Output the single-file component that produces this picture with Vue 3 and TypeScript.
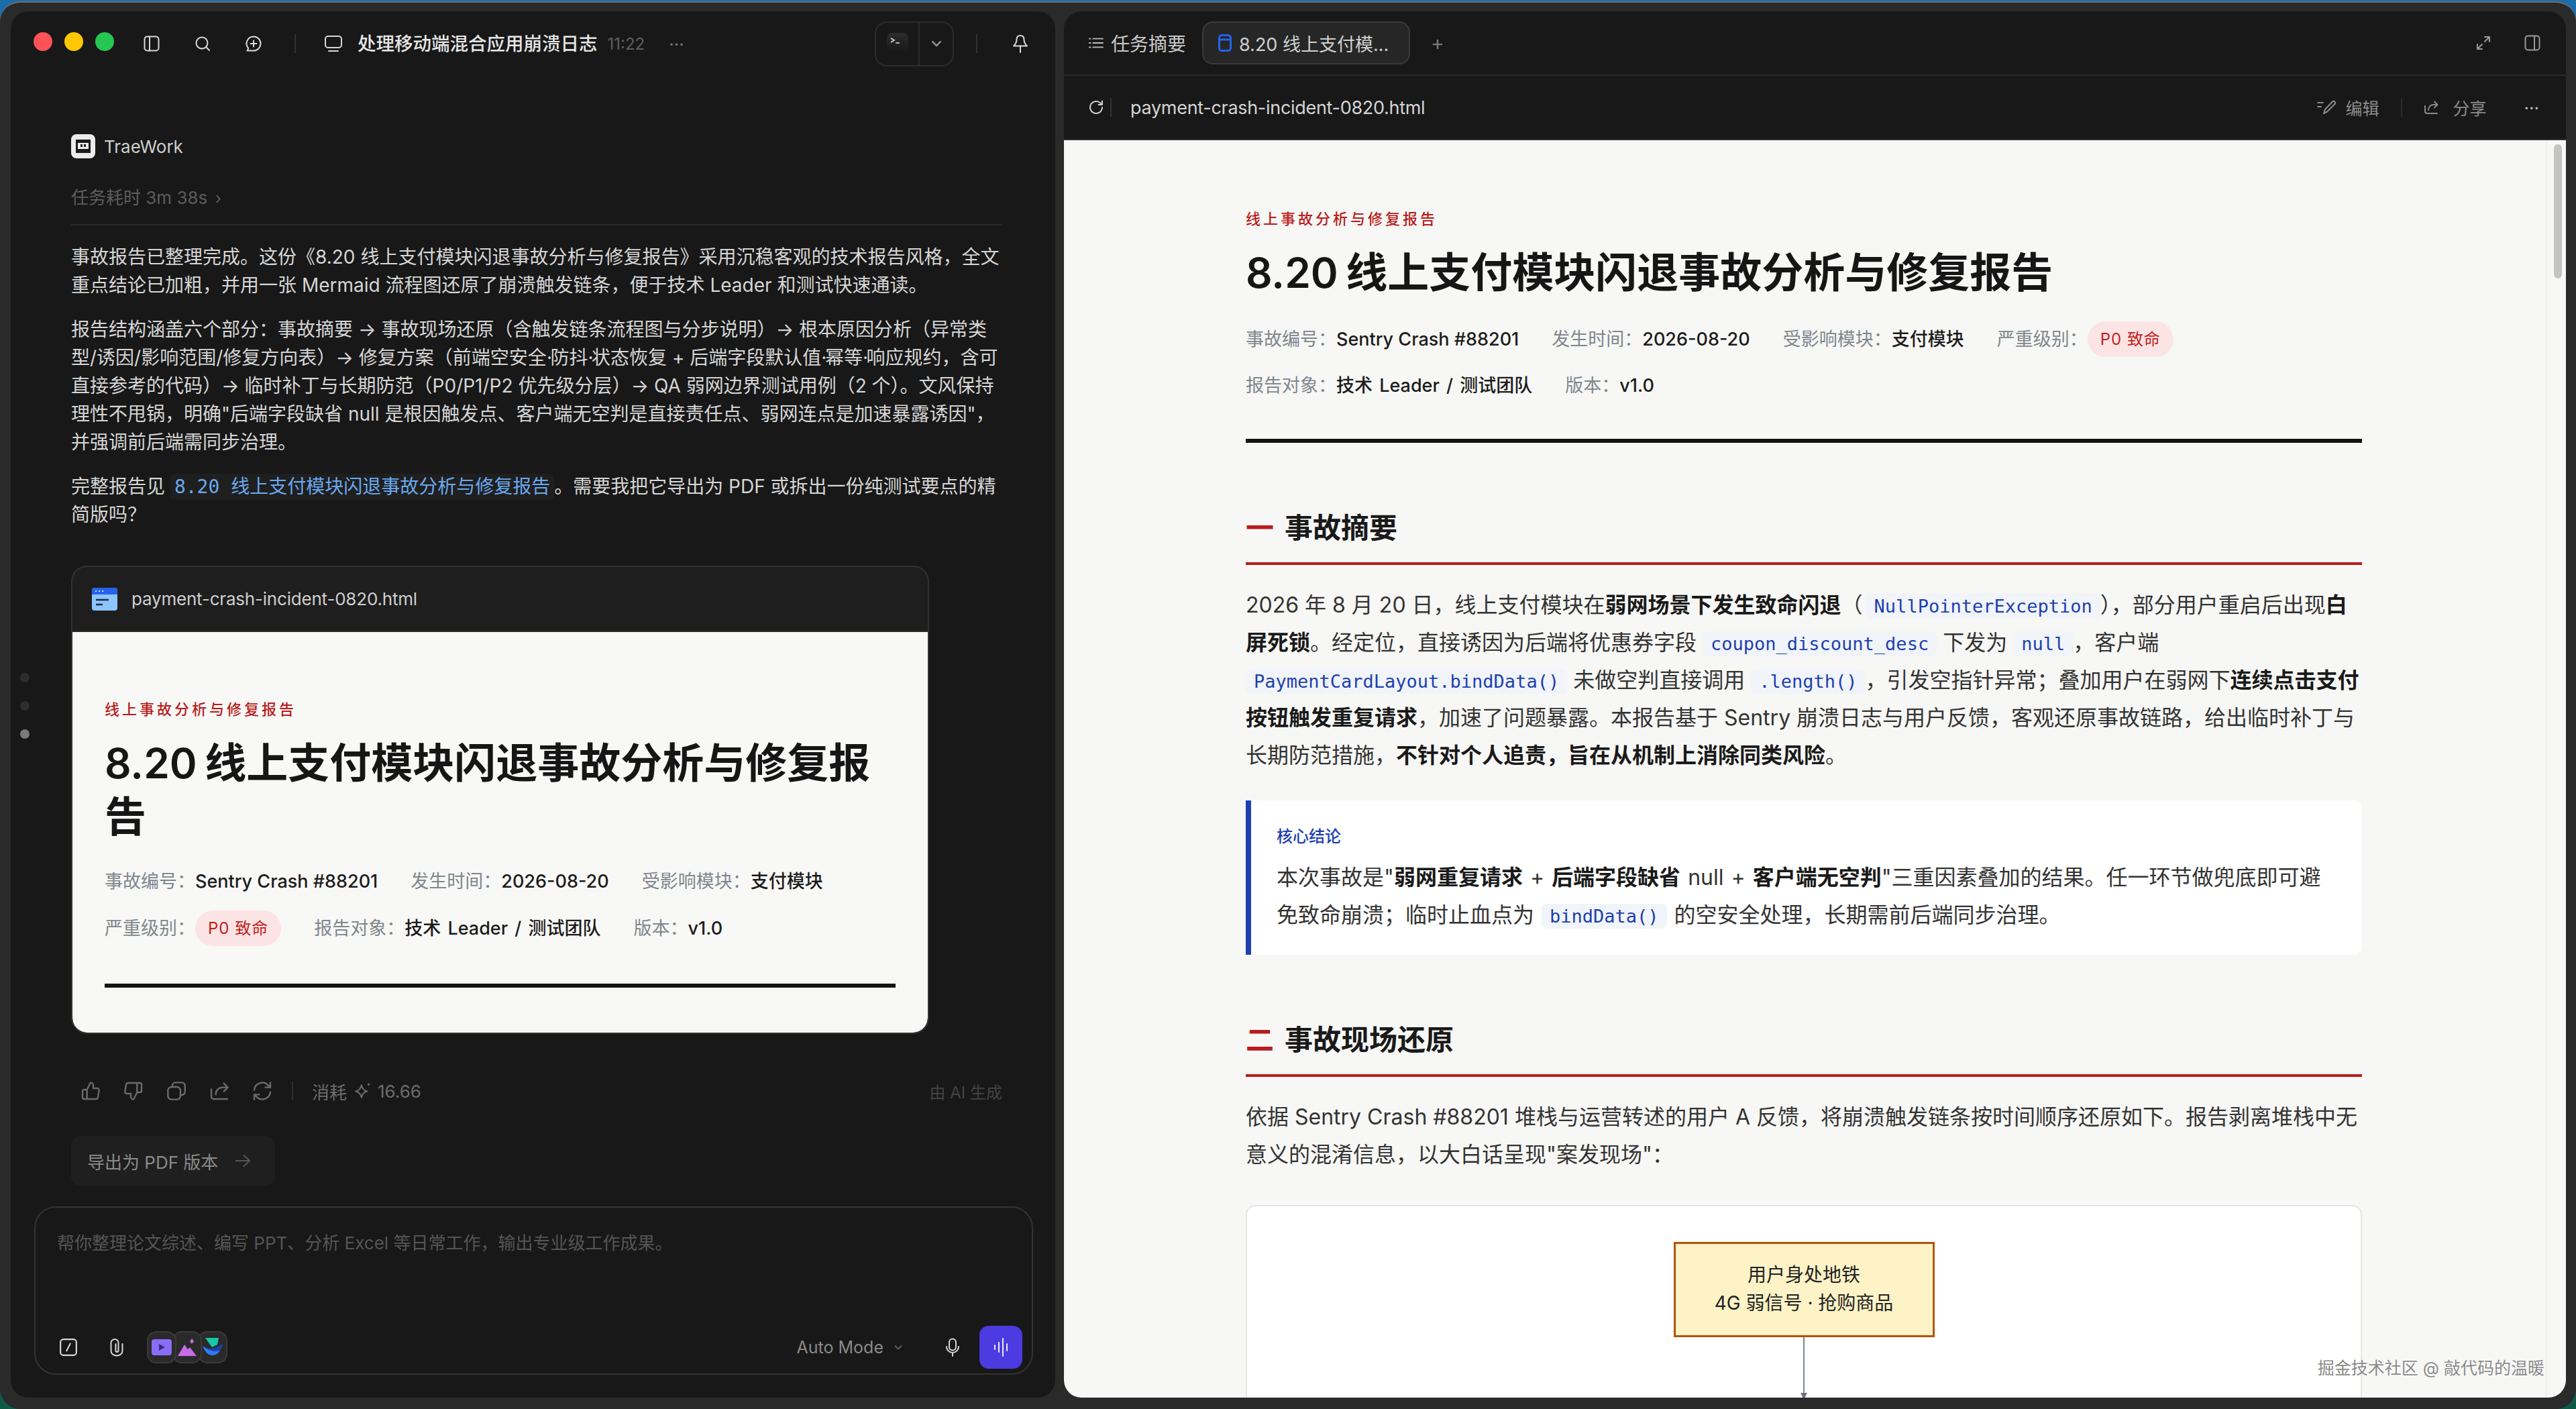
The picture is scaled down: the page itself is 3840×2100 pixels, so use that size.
<script setup lang="ts">
interface MetaItem {
  label: string;
  value: string;
  pill?: boolean;
  spaced?: boolean;
}

const metaItems: MetaItem[] = [
  { label: '事故编号：', value: 'Sentry Crash #88201' },
  { label: '发生时间：', value: '2026-08-20' },
  { label: '受影响模块：', value: '支付模块' },
  { label: '严重级别：', value: 'P0 致命', pill: true },
  { label: '报告对象：', value: '技术 Leader / 测试团队', spaced: true },
  { label: '版本：', value: 'v1.0' },
];

const dots = [false, false, true];
</script>

<template>
  <div class="desktop">
    <div class="window">
      <section class="panel left">
        <div class="sidedots">
          <i v-for="(on, i) in dots" :key="i" :class="{ on }"></i>
        </div>

        <header class="bar">
          <div class="lights"><i class="r"></i><i class="y"></i><i class="g"></i></div>
          <svg class="ico first" viewBox="0 0 24 24"><rect x="1.5" y="1.5" width="21" height="21" rx="4" /><path d="M9 1.5v21" /></svg>
          <svg class="ico gap52" viewBox="0 0 24 24"><circle cx="11" cy="11" r="8.5" /><path d="M17.5 17.5 22 22" /></svg>
          <svg class="ico gap52" viewBox="0 0 24 24"><path d="M12 1.5a10.5 10.5 0 0 1 0 21H2.5l1.8-3.4A10.5 10.5 0 0 1 12 1.5Z" /><path d="M12 7.5v9M7.5 12h9" /></svg>
          <span class="vline gap49"></span>
          <svg class="ico monitor" viewBox="0 0 28 28"><rect x="2" y="3" width="24" height="17" rx="4" /><path d="M7 25h14" /></svg>
          <h1 class="task-title">处理移动端混合应用崩溃日志</h1>
          <span class="task-time">11:22</span>
          <span class="more">···</span>
          <div class="widget">
            <div class="widget-app">
              <span class="tile"><svg viewBox="0 0 32 32"><path d="M6 8l5 3-5 3M13 15h6" fill="none" stroke="#ddd" stroke-width="1.6" /></svg></span>
            </div>
            <div class="widget-arrow">
              <svg viewBox="0 0 16 10"><path d="M1.5 1.5 8 8l6.5-6.5" fill="none" stroke="#999" stroke-width="2.4" /></svg>
            </div>
          </div>
          <span class="vline gap33"></span>
          <svg class="ico bell" viewBox="0 0 24 28"><path d="M12 2c3.500 0 5.500 2.500 5.500 6 0 4 1.200 6.500 4.500 9.500H2C5.300 14.500 6.500 12 6.500 8c0-3.500 2-6 5.500-6Z" /><path d="M12 17.500V27" /></svg>
        </header>

        <div class="thread">
          <div class="agent">
            <span class="agent-logo">
              <svg viewBox="0 0 36 36"><rect x="0" y="0" width="36" height="36" rx="8" fill="#ececec" /><rect x="7" y="8" width="22" height="20" fill="#1a1a1a" /><rect x="10" y="13" width="16" height="9" fill="#ececec" /><rect x="14" y="15" width="3" height="4" fill="#1a1a1a" /><rect x="19" y="15" width="3" height="4" fill="#1a1a1a" /></svg>
            </span>
            <span class="agent-name">TraeWork</span>
          </div>
          <div class="elapsed">任务耗时 3m 38s <span class="chev">›</span></div>
          <div class="hr"></div>

          <p class="msg">事故报告已整理完成。这份《8.20 线上支付模块闪退事故分析与修复报告》采用沉稳客观的技术报告风格，全文<br />重点结论已加粗，并用一张 Mermaid 流程图还原了崩溃触发链条，便于技术 Leader 和测试快速通读。</p>
          <p class="msg">报告结构涵盖六个部分：事故摘要 → 事故现场还原（含触发链条流程图与分步说明）→ 根本原因分析（异常类<br />型/诱因/影响范围/修复方向表）→ 修复方案（前端空安全<span class="mid">·</span>防抖<span class="mid">·</span>状态恢复 + 后端字段默认值<span class="mid">·</span>幂等<span class="mid">·</span>响应规约，含可<br />直接参考的代码）→ 临时补丁与长期防范（P0/P1/P2 优先级分层）→ QA 弱网边界测试用例（2 个）。文风保持<br />理性不甩锅，明确"后端字段缺省 null 是根因触发点、客户端无空判是直接责任点、弱网连点是加速暴露诱因"，<br />并强调前后端需同步治理。</p>
          <p class="msg">完整报告见 <code class="link">8.20 线上支付模块闪退事故分析与修复报告</code>。需要我把它导出为 PDF 或拆出一份纯测试要点的精<br />简版吗？</p>

          <div class="file-card">
            <div class="file-head">
              <svg class="file-ico" viewBox="0 0 38 34"><rect width="38" height="34" rx="4" fill="#8cc4ff" /><path d="M0 4a4 4 0 0 1 4-4h30a4 4 0 0 1 4 4v6H0Z" fill="#2563eb" /><path d="M5 5h2M10 5h2M15 5h2" stroke="#cfe4ff" stroke-width="2" /><path d="M6 18h19M6 25h10" stroke="#1a2a4a" stroke-width="2.500" /></svg>
              <span>payment-crash-incident-0820.html</span>
            </div>
            <div class="doc card-doc">
              <div class="eyebrow">线上事故分析与修复报告</div>
              <div class="doc-title">8.20 线上支付模块闪退事故分析与修复报告</div>
              <div class="meta">
                <div v-for="m in metaItems" :key="m.label" class="meta-item">
                  <span class="meta-label">{{ m.label }}</span>
                  <span :class="[m.pill ? 'pill' : 'meta-value', { spaced: m.spaced }]">{{ m.value }}</span>
                </div>
              </div>
              <div class="thick"></div>
            </div>
          </div>

          <div class="actions">
            <svg class="ico act" viewBox="0 0 24 24"><path d="M8 10.500V21H4.500A1.500 1.500 0 0 1 3 19.500V12a1.500 1.500 0 0 1 1.500-1.500H8l4-8a3 3 0 0 1 3 3V9h4.500a2 2 0 0 1 2 2.300l-1.200 7.500A2.500 2.500 0 0 1 17.800 21H8" /></svg>
            <svg class="ico act" viewBox="0 0 24 24"><path d="M16 13.500V3h3.500A1.500 1.500 0 0 1 21 4.500V12a1.500 1.500 0 0 1-1.500 1.500H16l-4 8a3 3 0 0 1-3-3V15H4.500a2 2 0 0 1-2-2.300l1.200-7.500A2.500 2.500 0 0 1 6.200 3H16" /></svg>
            <svg class="ico act" viewBox="0 0 24 24"><rect x="2.500" y="7.500" width="14" height="14" rx="4" /><path d="M7.500 7.500V6A3.500 3.500 0 0 1 11 2.500h7A3.500 3.500 0 0 1 21.500 6v7a3.500 3.500 0 0 1-3.500 3.500h-1.500" /></svg>
            <svg class="ico act" viewBox="0 0 24 24"><path d="M3 10v8a3 3 0 0 0 3 3h15" /><path d="M8 16c0-5 3.500-8 8-8h5M17 3.500 21.500 8 17 12.500" /></svg>
            <svg class="ico act" viewBox="0 0 24 24"><path d="M3 11a9 9 0 0 1 15.500-5.500L21 8M21 2.500V8h-5.500" /><path d="M21 13a9 9 0 0 1-15.500 5.500L3 16M3 21.500V16h5.500" /></svg>
            <span class="vline small"></span>
            <span class="cost">消耗</span>
            <svg class="ico spark" viewBox="0 0 26 26"><path d="M11 5c1 5 3.500 7.500 8 8.500-4.500 1-7 3.500-8 8.500-1-5-3.500-7.500-8-8.500 4.500-1 7-3.500 8-8.500Z" /><path d="M21 1.500c.3 1.500 1 2.200 2.500 2.500-1.500.3-2.200 1-2.500 2.500-.3-1.500-1-2.200-2.500-2.500 1.500-.3 2.200-1 2.500-2.500Z" fill="currentColor" stroke="none" /></svg>
            <span class="cost num">16.66</span>
            <span class="ai-tag">由 AI 生成</span>
          </div>

          <button class="suggest">导出为 PDF 版本 <svg viewBox="0 0 26 22"><path d="M2 11h21M14 2.500 23 11l-9 8.500" fill="none" stroke="#555" stroke-width="2" /></svg></button>
        </div>

        <div class="composer">
          <div class="placeholder">帮你整理论文综述、编写 PPT、分析 Excel 等日常工作，输出专业级工作成果。</div>
          <div class="composer-row">
            <svg class="ico tool" viewBox="0 0 26 26"><rect x="2" y="2" width="22" height="22" rx="4" /><path d="M15.500 8 10.500 18" /></svg>
            <svg class="ico clip" viewBox="0 0 24 28"><path d="M20.500 9v10.500a8.500 7 0 0 1-17 0V7a5.500 5 0 0 1 11 0v12a2 2 0 0 1-4 0V9" /></svg>
            <div class="chips">
              <span class="chip c1"><svg viewBox="0 0 30 24"><rect width="30" height="24" rx="4" fill="#8b6cf6" /><path d="M11 7l9 5-9 5Z" fill="#3a2a80" /></svg></span>
              <span class="chip c2"><svg viewBox="0 0 30 26"><path d="M1 26 11 9l5 7 3-3 10 13Z" fill="#c76be6" /><path d="M22 0l3 4-3 4-3-4Z" fill="#c76be6" /></svg></span>
              <span class="chip c3"><svg viewBox="0 0 30 28"><path d="M4 0h20l-2 10-8 4Z" fill="#14c8a8" /><path d="M30 9c-1 9-8 13-14 13C8 22 3 19 0 12c6 4 12 5 18 3Z" fill="#1e3fae" /><path d="M0 12c3 8 8 14 14 14 6 0 10-3 12-8-6 4-16 2-26-6Z" fill="#2f7cf0" /></svg></span>
            </div>
            <span class="mode">Auto Mode <svg viewBox="0 0 12 8"><path d="M1 1.500 6 6.500l5-5" fill="none" stroke="#777" stroke-width="1.500" /></svg></span>
            <svg class="ico mic" viewBox="0 0 22 28"><rect x="6" y="1.500" width="10" height="17" rx="5" /><path d="M2 13a9 9 0 0 0 18 0M11 22v5" /></svg>
            <button class="send"><svg viewBox="0 0 24 32"><path d="M3 13v6M9 9v14M15 3v26M21 11v10" fill="none" stroke="#fff" stroke-width="1.800" stroke-linecap="round" /></svg></button>
          </div>
        </div>
      </section>

      <section class="panel right">
        <header class="tabs">
          <svg class="ico list" viewBox="0 0 24 24"><path d="M7 5h16M7 12h16M7 19h16M1 5h2M1 12h2M1 19h2" /></svg>
          <span class="tab-plain">任务摘要</span>
          <div class="tab-on">
            <svg class="tab-ico" viewBox="0 0 20 26"><rect x="1.500" y="1.500" width="17" height="23" rx="4" fill="none" stroke="#2563eb" stroke-width="3" /><path d="M1.500 8h17" stroke="#2563eb" stroke-width="3" /></svg>
            <span>8.20 线上支付模...</span>
          </div>
          <span class="plus">+</span>
          <svg class="ico expand" viewBox="0 0 24 24"><path d="M14 3h7v7M21 3l-7 7M10 21H3v-7M3 21l7-7" /></svg>
          <svg class="ico split" viewBox="0 0 24 24"><rect x="1.500" y="1.500" width="21" height="21" rx="4" /><path d="M15 1.500v21" /></svg>
        </header>
        <div class="addr">
          <svg class="ico refresh" viewBox="0 0 24 24"><path d="M21 12a9 9 0 1 1-3-6.700L21 8M21 2.500V8h-5.500" /></svg>
          <span class="vline addr-line"></span>
          <span class="addr-name">payment-crash-incident-0820.html</span>
          <svg class="ico addr-edit" viewBox="0 0 28 24"><path d="M1 5h8M1 11h5M10 21l2-6L23 3.500a2.500 2.500 0 0 1 3.500 3.500L15 18.500Z" /></svg>
          <span class="addr-act">编辑</span>
          <span class="vline addr-div"></span>
          <svg class="ico addr-share" viewBox="0 0 24 24"><path d="M3 10v8a3 3 0 0 0 3 3h15" /><path d="M8 16c0-5 3.500-8 8-8h5M17 3.500 21.500 8 17 12.500" /></svg>
          <span class="addr-act share-label">分享</span>
          <span class="addr-more">···</span>
        </div>

        <div class="viewer">
          <div class="doc main-doc">
            <div class="eyebrow">线上事故分析与修复报告</div>
            <div class="doc-title">8.20 线上支付模块闪退事故分析与修复报告</div>
            <div class="meta">
              <div v-for="m in metaItems" :key="m.label" class="meta-item">
                <span class="meta-label">{{ m.label }}</span>
                <span :class="[m.pill ? 'pill' : 'meta-value', { spaced: m.spaced }]">{{ m.value }}</span>
              </div>
            </div>
            <div class="thick"></div>

            <h2><em>一</em>事故摘要</h2>
            <p class="body">2026 年 8 月 20 日，线上支付模块在<b>弱网场景下发生致命闪退</b>（<code class="tight">NullPointerException</code>），部分用户重启后出现<b>白<br />屏死锁</b>。经定位，直接诱因为后端将优惠券字段 <code>coupon_discount_desc</code> 下发为 <code>null</code>，客户端<br /><code>PaymentCardLayout.bindData()</code> 未做空判直接调用 <code>.length()</code>，引发空指针异常；叠加用户在弱网下<b>连续点击支付<br />按钮触发重复请求</b>，加速了问题暴露。本报告基于 Sentry 崩溃日志与用户反馈，客观还原事故链路，给出临时补丁与<br />长期防范措施，<b>不针对个人追责，旨在从机制上消除同类风险</b>。</p>

            <div class="callout">
              <div class="callout-label">核心结论</div>
              <p>本次事故是"<b>弱网重复请求</b> + <b>后端字段缺省</b> null + <b>客户端无空判</b>"三重因素叠加的结果。任一环节做兜底即可避<br />免致命崩溃；临时止血点为 <code>bindData()</code> 的空安全处理，长期需前后端同步治理。</p>
            </div>

            <h2><em>二</em>事故现场还原</h2>
            <p class="body">依据 Sentry Crash #88201 堆栈与运营转述的用户 A 反馈，将崩溃触发链条按时间顺序还原如下。报告剥离堆栈中无<br />意义的混淆信息，以大白话呈现"案发现场"：</p>

            <div class="diagram">
              <div class="node">用户身处地铁<br />4G 弱信号 · 抢购商品</div>
              <div class="edge"></div>
              <div class="edge-head"></div>
            </div>
          </div>
          <div class="scrollbar"></div>
          <div class="watermark">掘金技术社区 @ 敲代码的温暖</div>
        </div>
      </section>
    </div>
  </div>
</template>

<style>
html,
body {
  margin: 0;
  background: #222;
}
</style>

<style scoped>
.desktop {
  width: 3840px;
  height: 2100px;
  overflow: hidden;
  background: linear-gradient(180deg, #1d6ea8 0%, #1d6ea8 50%, #0e5a48 100%);
  font-family: Inter, "Noto Sans CJK SC", sans-serif;
}
.window {
  box-sizing: border-box;
  width: 3840px;
  height: 2098px;
  margin-top: 2px;
  padding: 13px 15px 15px 16px;
  display: flex;
  gap: 13px;
  background: #2a2a2a;
  border-top: 2px solid #6d6d6d;
  border-radius: 30px;
}
.panel {
  position: relative;
  height: 2066px;
  background: #181818;
  border-radius: 26px;
  overflow: hidden;
  display: flex;
  flex-direction: column;
}
.left {
  width: 1557px;
}
.right {
  width: 2239px;
}
.ico {
  fill: none;
  stroke: currentColor;
  stroke-width: 2;
  stroke-linecap: round;
  stroke-linejoin: round;
  flex-shrink: 0;
}

.sidedots {
  position: absolute;
  left: 14px;
  top: 986px;
  display: flex;
  flex-direction: column;
  gap: 28px;
}
.sidedots i {
  width: 14px;
  height: 14px;
  border-radius: 50%;
  background: #2e2e2e;
}
.sidedots i.on {
  background: #7a7a7a;
}

.bar {
  height: 96px;
  flex-shrink: 0;
  display: flex;
  align-items: center;
  padding-left: 34px;
  color: #d8d8d8;
}
.lights {
  display: flex;
  gap: 18px;
  margin-top: -6px;
}
.lights i {
  width: 28px;
  height: 28px;
  border-radius: 50%;
}
.lights .r {
  background: #ff5257;
}
.lights .y {
  background: #ffc800;
}
.lights .g {
  background: #28c653;
}
.bar .ico {
  width: 24px;
  height: 24px;
}
.first {
  margin-left: 44px;
}
.gap52 {
  margin-left: 52px;
}
.vline {
  width: 2px;
  height: 28px;
  background: #333;
  flex-shrink: 0;
}
.gap49 {
  margin-left: 49px;
}
.bar .monitor {
  width: 28px;
  height: 28px;
  margin-left: 42px;
}
.task-title {
  margin: 0 0 0 22px;
  font-size: 27.5px;
  font-weight: 500;
  line-height: 40px;
  color: #e6e6e6;
}
.task-time {
  margin-left: 15px;
  font-size: 24px;
  color: #5e5e5e;
}
.more {
  margin-left: 36px;
  font-size: 26px;
  color: #777;
}
.widget {
  margin-left: auto;
  width: 118px;
  height: 67px;
  box-sizing: border-box;
  border: 2px solid #2c2c2c;
  border-radius: 18px;
  display: flex;
}
.widget-app {
  width: 63px;
  border-right: 2px solid #2c2c2c;
  display: flex;
  align-items: center;
  justify-content: center;
}
.tile {
  width: 32px;
  height: 32px;
  border-radius: 8px;
  background: linear-gradient(180deg, #2c2c2c, #161616);
  display: block;
}
.tile svg {
  width: 32px;
  height: 32px;
  display: block;
}
.widget-arrow {
  flex: 1;
  display: flex;
  align-items: center;
  justify-content: center;
}
.widget-arrow svg {
  width: 16px;
  height: 10px;
}
.gap33 {
  margin-left: 33px;
}
.bar .bell {
  width: 24px;
  height: 28px;
  margin-left: 52px;
  margin-right: 40px;
}

.thread {
  flex: 1;
  min-height: 0;
  padding: 87px 79px 0 90px;
  color: #d8d8d8;
}
.agent {
  display: flex;
  align-items: center;
  gap: 13px;
  height: 36px;
}
.agent-logo,
.agent-logo svg {
  width: 36px;
  height: 36px;
  display: block;
}
.agent-name {
  font-size: 26px;
  color: #cfcfcf;
}
.elapsed {
  margin-top: 41px;
  line-height: 36px;
  font-size: 26px;
  color: #5c5c5c;
}
.chev {
  margin-left: 4px;
  font-size: 24px;
}
.hr {
  height: 2px;
  margin-top: 20px;
  background: #2a2a2a;
}
.msg {
  margin: 24px 0 0;
  font-size: 28px;
  line-height: 42px;
  white-space: nowrap;
  color: #d6d6d6;
}
.hr + .msg {
  margin-top: 26px;
}
.mid {
  letter-spacing: -2.5px;
}
.link {
  font-family: "DejaVu Sans Mono", "Noto Sans CJK SC", monospace;
  font-size: 28px;
  line-height: 1;
  color: #6aa9ef;
  background: #1f1f1f;
  border-radius: 6px;
  padding: 3px 6px;
}

.file-card {
  width: 1279px;
  margin-top: 55px;
  box-sizing: border-box;
  border: 2px solid #323232;
  border-radius: 24px;
  overflow: hidden;
  background: #1e1e1e;
}
.file-head {
  height: 95px;
  display: flex;
  align-items: center;
  padding-left: 29px;
  gap: 21px;
  font-size: 26px;
  letter-spacing: -0.2px;
  color: #cfcfcf;
  border-bottom: 2px solid #2c2c2c;
}
.file-ico {
  width: 38px;
  height: 34px;
}
.doc {
  background: #f8f8f6;
  color: #2a2a2a;
}
.card-doc {
  padding: 99px 48px 67px 48px;
  border-radius: 0 0 22px 22px;
}
.card-doc .meta {
  margin-top: 35px;
}
.card-doc .thick {
  margin-top: 56px;
}
.eyebrow {
  font-size: 22px;
  line-height: 32px;
  letter-spacing: 4px;
  font-weight: 500;
  color: #b91c1c;
}
.doc-title {
  margin-top: 25px;
  font-size: 62px;
  line-height: 80px;
  font-weight: 600;
  word-spacing: -4px;
  color: #161616;
}
.meta {
  display: flex;
  flex-wrap: wrap;
  align-items: center;
  column-gap: 49px;
  row-gap: 22px;
  margin-top: 32px;
  font-size: 27px;
  line-height: 42px;
}
.meta-item {
  display: flex;
  align-items: center;
  white-space: nowrap;
}
.meta-label {
  color: #80868e;
}
.meta-value {
  color: #1c1c1c;
  font-weight: 500;
}
.spaced {
  word-spacing: 3px;
}
.pill {
  height: 53px;
  line-height: 53px;
  padding: 0 19px;
  border-radius: 27px;
  font-size: 24px;
  letter-spacing: 1px;
  color: #c21d1d;
  background: #fde4e4;
}
.thick {
  height: 6px;
  margin-top: 58px;
  background: #141414;
}

.actions {
  display: flex;
  align-items: center;
  height: 40px;
  margin-top: 65px;
  color: #6b6b6b;
}
.act {
  width: 32px;
  height: 32px;
  margin: 0 16px;
  stroke-width: 1.8;
}
.act:first-child {
  margin-left: 13px;
}
.vline.small {
  height: 28px;
  margin-left: 12px;
  background: #2e2e2e;
}
.cost {
  font-size: 26px;
}
.vline.small + .cost {
  margin-left: 28px;
}
.spark {
  width: 28px;
  height: 28px;
  margin: 0 8px 0 10px;
}
.ai-tag {
  margin-left: auto;
  font-size: 24px;
  color: #444;
}
.suggest {
  display: flex;
  align-items: center;
  gap: 24px;
  height: 74px;
  width: 304px;
  margin-top: 47px;
  padding: 0 0 0 24px;
  border: 0;
  border-radius: 14px;
  background: #1f1f1f;
  font: inherit;
  font-size: 26px;
  color: #8a8a8a;
}
.suggest svg {
  width: 26px;
  height: 22px;
}

.composer {
  flex-shrink: 0;
  box-sizing: border-box;
  width: 1489px;
  height: 251px;
  margin: 0 0 34px 35px;
  border: 2px solid #333;
  border-radius: 32px;
  padding: 34px 14px 7px 32px;
  display: flex;
  flex-direction: column;
  justify-content: space-between;
}
.placeholder {
  font-size: 26px;
  line-height: 38px;
  color: #555;
}
.composer-row {
  display: flex;
  align-items: center;
  color: #d8d8d8;
}
.tool {
  width: 28px;
  height: 28px;
  margin-left: 3px;
}
.clip {
  width: 24px;
  height: 28px;
  margin-left: 46px;
}
.chips {
  display: flex;
  margin-left: 33px;
}
.chip {
  width: 44px;
  height: 48px;
  box-sizing: border-box;
  border: 2px solid #3a3a3a;
  border-radius: 14px;
  background: #2a2a2a;
  display: flex;
  align-items: center;
  justify-content: center;
  margin-right: -6px;
}
.chip.c1 {
  z-index: 3;
}
.chip.c2 {
  z-index: 2;
}
.chip svg {
  width: 30px;
  flex-shrink: 0;
}
.mode {
  margin-left: auto;
  display: flex;
  align-items: center;
  gap: 16px;
  font-size: 25px;
  color: #8a8a8a;
}
.mode svg {
  width: 12px;
  height: 8px;
}
.mic {
  width: 22px;
  height: 28px;
  margin: 0 29px 0 64px;
}
.send {
  width: 64px;
  height: 64px;
  padding: 0;
  border: 0;
  border-radius: 14px;
  background: #4b3be0;
  display: flex;
  align-items: center;
  justify-content: center;
}
.send svg {
  width: 24px;
  height: 32px;
}

.tabs {
  height: 96px;
  flex-shrink: 0;
  box-sizing: border-box;
  display: flex;
  align-items: center;
  padding: 0 38px 0 36px;
  border-bottom: 2px solid #2a2a2a;
  color: #bdbdbd;
  font-size: 28px;
}
.list {
  width: 24px;
  height: 22px;
}
.tab-plain {
  margin-left: 10px;
  color: #c8c8c8;
}
.tab-on {
  width: 310px;
  height: 64px;
  box-sizing: border-box;
  margin-left: 24px;
  display: flex;
  align-items: center;
  padding-left: 22px;
  gap: 11px;
  background: #262626;
  border: 2px solid #3a3a3a;
  border-radius: 16px;
  color: #d0d0d0;
  font-size: 27px;
  white-space: nowrap;
}
.tab-ico {
  width: 20px;
  height: 26px;
}
.plus {
  margin-left: 31px;
  font-size: 30px;
  color: #777;
}
.expand {
  width: 24px;
  height: 24px;
  margin-left: auto;
  color: #999;
}
.split {
  width: 24px;
  height: 24px;
  margin-left: 49px;
  color: #999;
}
.addr {
  height: 96px;
  flex-shrink: 0;
  box-sizing: border-box;
  display: flex;
  align-items: center;
  padding: 0 40px 0 36px;
  border-bottom: 2px solid #2e2e2e;
  color: #8c8c8c;
  font-size: 25px;
}
.refresh {
  width: 24px;
  height: 24px;
  color: #cfcfcf;
}
.addr-line {
  margin-left: 9px;
}
.addr-name {
  margin-left: 28px;
  font-size: 27px;
  letter-spacing: -0.3px;
  color: #d4d4d4;
}
.addr-edit {
  width: 28px;
  height: 24px;
  margin-left: auto;
}
.addr-act {
  margin-left: 14px;
}
.addr-act.share-label {
  margin-left: 21px;
}
.addr-div {
  margin-left: 32px;
  background: #2a2a2a;
}
.addr-share {
  width: 24px;
  height: 24px;
  margin-left: 31px;
}
.addr-more {
  margin-left: 56px;
  font-size: 26px;
  color: #bdbdbd;
}
.viewer {
  position: relative;
  flex: 1;
  min-height: 0;
  overflow: hidden;
  background: #f7f7f5;
}
.main-doc {
  background: transparent;
  width: 1664px;
  margin-left: 271px;
  padding-top: 101px;
}
h2 {
  margin: 99px 0 0;
  padding-bottom: 23px;
  border-bottom: 4px solid #b91c1c;
  font-size: 42px;
  line-height: 56px;
  font-weight: 600;
  color: #1a1a1a;
}
h2 em {
  display: inline-block;
  width: 58px;
  font-style: normal;
  color: #b91c1c;
}
.body {
  margin: 32px 0 0;
  font-size: 32px;
  line-height: 56px;
  white-space: nowrap;
  color: #333;
}
.body b,
.callout b {
  font-weight: 600;
  color: #1a1a1a;
}
code {
  font-family: "DejaVu Sans Mono", "Noto Sans CJK SC", monospace;
  font-size: 27px;
  line-height: 1;
  padding: 3px 12px;
  border-radius: 8px;
  color: #1e40af;
  background: #f1f4f9;
}
.tight {
  margin-left: 5px;
}
.callout {
  box-sizing: border-box;
  height: 230px;
  margin-top: 39px;
  padding: 37px 40px 0 38px;
  background: #fff;
  border-left: 8px solid #1e40af;
  border-radius: 0 12px 12px 0;
}
.callout-label {
  font-size: 24px;
  line-height: 34px;
  font-weight: 500;
  color: #1e40af;
}
.callout p {
  margin: 16px 0 0;
  font-size: 32px;
  line-height: 56px;
  white-space: nowrap;
  word-spacing: 2px;
  color: #333;
}
.diagram {
  box-sizing: border-box;
  height: 400px;
  margin-top: 47px;
  padding-top: 53px;
  background: #fff;
  border: 2px solid #e6e6e6;
  border-radius: 14px;
  display: flex;
  flex-direction: column;
  align-items: center;
}
.node {
  box-sizing: border-box;
  width: 389px;
  height: 142px;
  padding-top: 25px;
  text-align: center;
  background: #fef3c7;
  border: 3px solid #b45309;
  font-size: 28px;
  line-height: 42px;
  color: #222;
}
.edge {
  width: 2px;
  height: 83px;
  background: #7b8494;
}
.edge-head {
  width: 0;
  height: 0;
  border-left: 5px solid transparent;
  border-right: 5px solid transparent;
  border-top: 10px solid #6b7280;
}
.scrollbar {
  position: absolute;
  right: 6px;
  top: 6px;
  width: 12px;
  height: 200px;
  border-radius: 6px;
  background: #c4c4c4;
}
.viewer::after {
  content: "";
  position: absolute;
  right: 28px;
  top: 0;
  bottom: 0;
  width: 2px;
  background: #eeeeec;
}
.watermark {
  position: absolute;
  right: 32px;
  bottom: 26px;
  font-size: 25px;
  line-height: 36px;
  color: #8a8a8a;
  text-shadow: 0 0 2px #fff, 0 0 2px #fff;
}
</style>
